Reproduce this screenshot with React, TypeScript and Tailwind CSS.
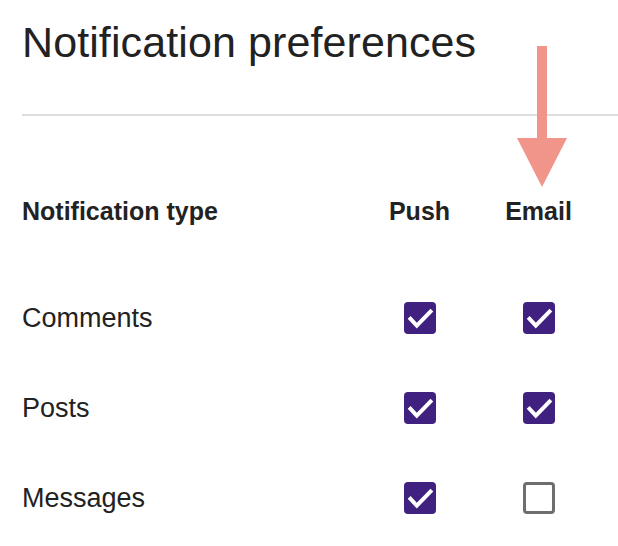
import React, { useState } from 'react';

type Pref = { label: string; push: boolean; email: boolean };

const initialPrefs: Pref[] = [
  { label: 'Comments', push: true, email: true },
  { label: 'Posts', push: true, email: true },
  { label: 'Messages', push: true, email: false },
];

const Checkbox: React.FC<{ checked: boolean; onToggle: () => void; label: string }> = ({ checked, onToggle, label }) => (
  <button
    type="button"
    role="checkbox"
    aria-checked={checked}
    aria-label={label}
    onClick={onToggle}
    className={
      checked
        ? 'w-[32px] h-[32px] rounded-[4px] bg-[#40217f] flex items-center justify-center'
        : 'w-[32px] h-[32px] rounded-[4px] border-[3px] border-[#6e6e6e] bg-white'
    }
  >
    {checked && (
      <svg width="32" height="32" viewBox="0 0 32 32" fill="none">
        <path d="M6.5 16.8 L12.8 23.6 L26.5 9.6" stroke="#fff" strokeWidth="4" strokeLinecap="square" />
      </svg>
    )}
  </button>
);

export default function App() {
  const [prefs, setPrefs] = useState<Pref[]>(initialPrefs);

  const toggle = (i: number, key: 'push' | 'email') => {
    setPrefs((p) => p.map((row, idx) => (idx === i ? { ...row, [key]: !row[key] } : row)));
  };

  return (
    <div className="relative w-[618px] h-[546px] bg-white text-[#222] font-[family-name:'Liberation_Sans',Arial,sans-serif] overflow-hidden">
      <div className="pl-[22px] pr-[20px] pt-[18px]">
        <h1 className="text-[43px] leading-[48px] font-normal tracking-[0.1px]">Notification preferences</h1>
      </div>

      <div className="ml-[22px] mt-[48px] h-[2px] bg-[#dedede]" />

      <div className="pl-[22px] pr-[20px]">
        <div className="grid grid-cols-[1fr_119px_119px] items-center h-[40px] mt-[76px] text-[25px] font-bold">
          <div>Notification type</div>
          <div className="text-center">Push</div>
          <div className="text-center">Email</div>
        </div>

        <div className="mt-[41px]">
          {prefs.map((row, i) => (
            <div key={row.label} className="grid grid-cols-[1fr_119px_119px] items-center h-[90px] text-[27px]">
              <div>{row.label}</div>
              <div className="flex justify-center">
                <Checkbox checked={row.push} onToggle={() => toggle(i, 'push')} label={`${row.label} push`} />
              </div>
              <div className="flex justify-center">
                <Checkbox checked={row.email} onToggle={() => toggle(i, 'email')} label={`${row.label} email`} />
              </div>
            </div>
          ))}
        </div>
      </div>

      {/* annotation arrow pointing at the Email column */}
      <svg className="absolute left-[517px] top-[46px]" width="50" height="141" viewBox="0 0 50 141">
        <rect x="20" y="0" width="10" height="93" fill="#f1948a" />
        <polygon points="0,92 50,92 25,141" fill="#f1948a" />
      </svg>
    </div>
  );
}
